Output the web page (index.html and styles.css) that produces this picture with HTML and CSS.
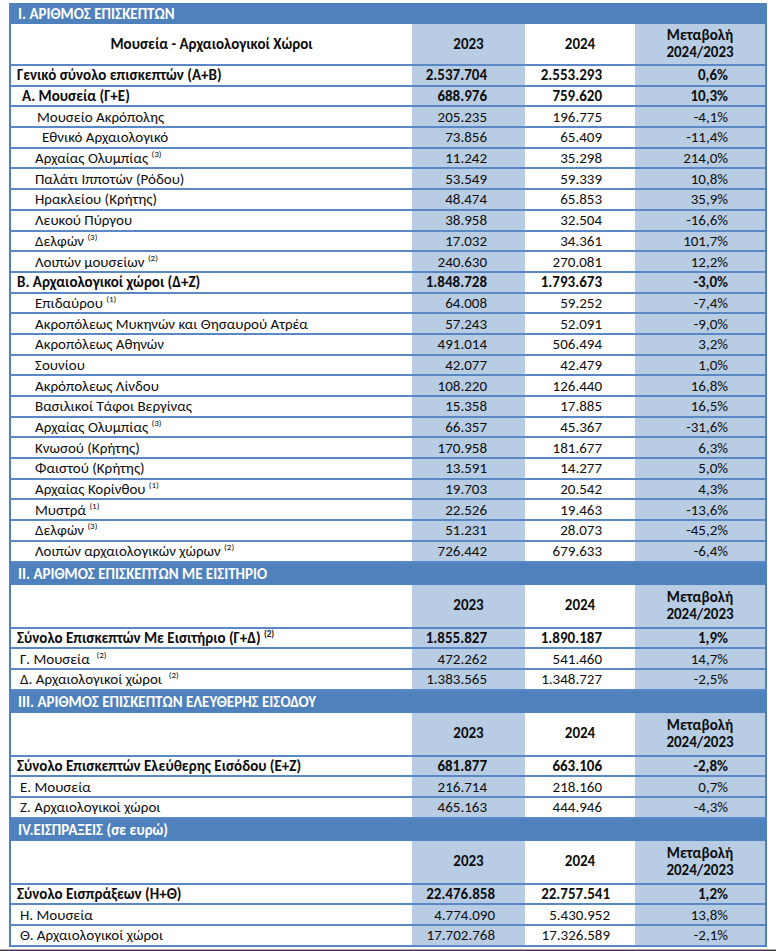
FILE: index.html
```html
<!DOCTYPE html>
<html lang="el">
<head>
<meta charset="utf-8">
<title>Επισκέπτες μουσείων και αρχαιολογικών χώρων</title>
<link rel="stylesheet" href="styles.css">
</head>
<body>
<div class="page">
<table class="stats">
<colgroup>
<col class="w-lbl"><col class="w-n1"><col class="w-n2"><col class="w-n3">
</colgroup>
<tbody>
<tr class="sec first"><td colspan="4">I. ΑΡΙΘΜΟΣ ΕΠΙΣΚΕΠΤΩΝ</td></tr>
<tr class="colhead first"><th class="lbl">Μουσεία - Αρχαιολογικοί Χώροι</th><th class="n1">2023</th><th class="n2">2024</th><th class="n3">Μεταβολή<br>2024/2023</th></tr>
<tr class="bold"><td class="lbl l-tot">Γενικό σύνολο επισκεπτών (Α+Β)</td><td class="n1">2.537.704</td><td class="n2">2.553.293</td><td class="n3">0,6%</td></tr>
<tr class="bold"><td class="lbl l-a">Α. Μουσεία (Γ+Ε)</td><td class="n1">688.976</td><td class="n2">759.620</td><td class="n3">10,3%</td></tr>
<tr><td class="lbl l-acr">Μουσείο Ακρόπολης</td><td class="n1">205.235</td><td class="n2">196.775</td><td class="n3">-4,1%</td></tr>
<tr><td class="lbl l-eth">Εθνικό Αρχαιολογικό</td><td class="n1">73.856</td><td class="n2">65.409</td><td class="n3">-11,4%</td></tr>
<tr><td class="lbl l-item">Αρχαίας Ολυμπίας <sup>(3)</sup></td><td class="n1">11.242</td><td class="n2">35.298</td><td class="n3">214,0%</td></tr>
<tr><td class="lbl l-item">Παλάτι Ιπποτών (Ρόδου)</td><td class="n1">53.549</td><td class="n2">59.339</td><td class="n3">10,8%</td></tr>
<tr><td class="lbl l-item">Ηρακλείου (Κρήτης)</td><td class="n1">48.474</td><td class="n2">65.853</td><td class="n3">35,9%</td></tr>
<tr><td class="lbl l-item">Λευκού Πύργου</td><td class="n1">38.958</td><td class="n2">32.504</td><td class="n3">-16,6%</td></tr>
<tr><td class="lbl l-item">Δελφών <sup>(3)</sup></td><td class="n1">17.032</td><td class="n2">34.361</td><td class="n3">101,7%</td></tr>
<tr><td class="lbl l-item">Λοιπών μουσείων <sup>(2)</sup></td><td class="n1">240.630</td><td class="n2">270.081</td><td class="n3">12,2%</td></tr>
<tr class="bold"><td class="lbl l-b">Β. Αρχαιολογικοί χώροι (Δ+Ζ)</td><td class="n1">1.848.728</td><td class="n2">1.793.673</td><td class="n3">-3,0%</td></tr>
<tr><td class="lbl l-item">Επιδαύρου <sup>(1)</sup></td><td class="n1">64.008</td><td class="n2">59.252</td><td class="n3">-7,4%</td></tr>
<tr><td class="lbl l-item">Ακροπόλεως Μυκηνών και Θησαυρού Ατρέα</td><td class="n1">57.243</td><td class="n2">52.091</td><td class="n3">-9,0%</td></tr>
<tr><td class="lbl l-item">Ακροπόλεως Αθηνών</td><td class="n1">491.014</td><td class="n2">506.494</td><td class="n3">3,2%</td></tr>
<tr><td class="lbl l-item">Σουνίου</td><td class="n1">42.077</td><td class="n2">42.479</td><td class="n3">1,0%</td></tr>
<tr><td class="lbl l-item">Ακρόπολεως Λίνδου</td><td class="n1">108.220</td><td class="n2">126.440</td><td class="n3">16,8%</td></tr>
<tr><td class="lbl l-item">Βασιλικοί Τάφοι Βεργίνας</td><td class="n1">15.358</td><td class="n2">17.885</td><td class="n3">16,5%</td></tr>
<tr><td class="lbl l-item">Αρχαίας Ολυμπίας <sup>(3)</sup></td><td class="n1">66.357</td><td class="n2">45.367</td><td class="n3">-31,6%</td></tr>
<tr><td class="lbl l-item">Κνωσού (Κρήτης)</td><td class="n1">170.958</td><td class="n2">181.677</td><td class="n3">6,3%</td></tr>
<tr><td class="lbl l-item">Φαιστού (Κρήτης)</td><td class="n1">13.591</td><td class="n2">14.277</td><td class="n3">5,0%</td></tr>
<tr><td class="lbl l-item">Αρχαίας Κορίνθου <sup>(1)</sup></td><td class="n1">19.703</td><td class="n2">20.542</td><td class="n3">4,3%</td></tr>
<tr><td class="lbl l-item">Μυστρά <sup>(1)</sup></td><td class="n1">22.526</td><td class="n2">19.463</td><td class="n3">-13,6%</td></tr>
<tr><td class="lbl l-item">Δελφών <sup>(3)</sup></td><td class="n1">51.231</td><td class="n2">28.073</td><td class="n3">-45,2%</td></tr>
<tr><td class="lbl l-item">Λοιπών αρχαιολογικών χώρων <sup>(2)</sup></td><td class="n1">726.442</td><td class="n2">679.633</td><td class="n3">-6,4%</td></tr>

<tr class="sec"><td colspan="4">II. ΑΡΙΘΜΟΣ ΕΠΙΣΚΕΠΤΩΝ ΜΕ ΕΙΣΙΤΗΡΙΟ</td></tr>
<tr class="colhead"><th class="lbl"></th><th class="n1">2023</th><th class="n2">2024</th><th class="n3">Μεταβολή<br>2024/2023</th></tr>
<tr class="bold"><td class="lbl l-tot">Σύνολο Επισκεπτών Με Εισιτήριο (Γ+Δ) <sup>(2)</sup></td><td class="n1">1.855.827</td><td class="n2">1.890.187</td><td class="n3">1,9%</td></tr>
<tr><td class="lbl l-sub">Γ. Μουσεία &nbsp;<sup>(2)</sup></td><td class="n1">472.262</td><td class="n2">541.460</td><td class="n3">14,7%</td></tr>
<tr><td class="lbl l-sub">Δ. Αρχαιολογικοί χώροι &nbsp;<sup>(2)</sup></td><td class="n1">1.383.565</td><td class="n2">1.348.727</td><td class="n3">-2,5%</td></tr>

<tr class="sec"><td colspan="4">III. ΑΡΙΘΜΟΣ ΕΠΙΣΚΕΠΤΩΝ ΕΛΕΥΘΕΡΗΣ ΕΙΣΟΔΟΥ</td></tr>
<tr class="colhead"><th class="lbl"></th><th class="n1">2023</th><th class="n2">2024</th><th class="n3">Μεταβολή<br>2024/2023</th></tr>
<tr class="bold"><td class="lbl l-tot">Σύνολο Επισκεπτών Ελεύθερης Εισόδου (Ε+Ζ)</td><td class="n1">681.877</td><td class="n2">663.106</td><td class="n3">-2,8%</td></tr>
<tr><td class="lbl l-sub">Ε. Μουσεία</td><td class="n1">216.714</td><td class="n2">218.160</td><td class="n3">0,7%</td></tr>
<tr><td class="lbl l-sub">Ζ. Αρχαιολογικοί χώροι</td><td class="n1">465.163</td><td class="n2">444.946</td><td class="n3">-4,3%</td></tr>

<tr class="sec"><td colspan="4">IV.ΕΙΣΠΡΑΞΕΙΣ (σε ευρώ)</td></tr>
<tr class="colhead"><th class="lbl"></th><th class="n1">2023</th><th class="n2">2024</th><th class="n3">Μεταβολή<br>2024/2023</th></tr>
<tr class="bold money"><td class="lbl l-tot">Σύνολο Εισπράξεων (Η+Θ)</td><td class="n1">22.476.858</td><td class="n2">22.757.541</td><td class="n3">1,2%</td></tr>
<tr class="money"><td class="lbl l-sub">Η. Μουσεία</td><td class="n1">4.774.090</td><td class="n2">5.430.952</td><td class="n3">13,8%</td></tr>
<tr class="money"><td class="lbl l-sub">Θ. Αρχαιολογικοί χώροι</td><td class="n1">17.702.768</td><td class="n2">17.326.589</td><td class="n3">-2,1%</td></tr>
</tbody>
</table>
<div class="edge"></div>
</div>
</body>
</html>
```

FILE: styles.css
```css
html, body {
  margin: 0;
  background: #ffffff;
}

body {
  font-family: Carlito, "Liberation Sans Narrow", "Liberation Sans", sans-serif;
  color: #0d0d0d;
}

.page {
  padding: 3px 0 0 9px;
  width: 767px;
}

.stats {
  border-collapse: separate;
  border-spacing: 0;
  table-layout: fixed;
  width: 758px;
  border-left: 2px solid #4f81bd;
  border-right: 2px solid #4f81bd;
}

.w-lbl { width: 401px; }
.w-n1 { width: 113px; }
.w-n2 { width: 110px; }
.w-n3 { width: 130px; }

.stats td,
.stats th {
  padding: 0;
  box-sizing: border-box;
  height: 20.7px;
  border-bottom: 2px solid #5a87c5;
  font-size: 15px;
  line-height: 16px;
  vertical-align: middle;
  white-space: nowrap;
  font-weight: normal;
}

.stats .n1,
.stats .n3 {
  background: #b8cce4;
}

.stats .n2,
.stats .lbl {
  background: #ffffff;
}

.stats .n1 { text-align: right; padding-right: 38px; }
.stats .n2 { text-align: right; padding-right: 33px; }
.stats .n3 { text-align: right; padding-right: 37px; }

.stats .money .n1 { padding-right: 30px; }
.stats .money .n2 { padding-right: 25px; }

.bold td { font-weight: bold; }

.l-tot { padding-left: 6px !important; }
.l-a { padding-left: 11px !important; }
.l-b { padding-left: 6px !important; }
.l-sub { padding-left: 9px !important; }
.l-acr { padding-left: 26px !important; }
.l-eth { padding-left: 31px !important; }
.l-item { padding-left: 24px !important; }

.stats .sec td {
  background: #4f81bd;
  color: #ffffff;
  font-weight: bold;
  height: 22px;
  padding-left: 7px;
  border-bottom: 0;
}

.stats .colhead th {
  height: 44px;
  font-weight: bold;
  text-align: center;
  padding: 0;
  line-height: 17px;
}

.stats .sec.first td { height: 21px; }
.stats .colhead.first th { height: 42px; }

sup {
  font-size: 9px;
  line-height: 0;
  vertical-align: 6px;
}

.edge {
  margin-left: -9px;
  margin-top: 2px;
  width: 776px;
  height: 4px;
  border-top: 1px solid #a9a9a9;
  background: #3b3b3b;
}
```
